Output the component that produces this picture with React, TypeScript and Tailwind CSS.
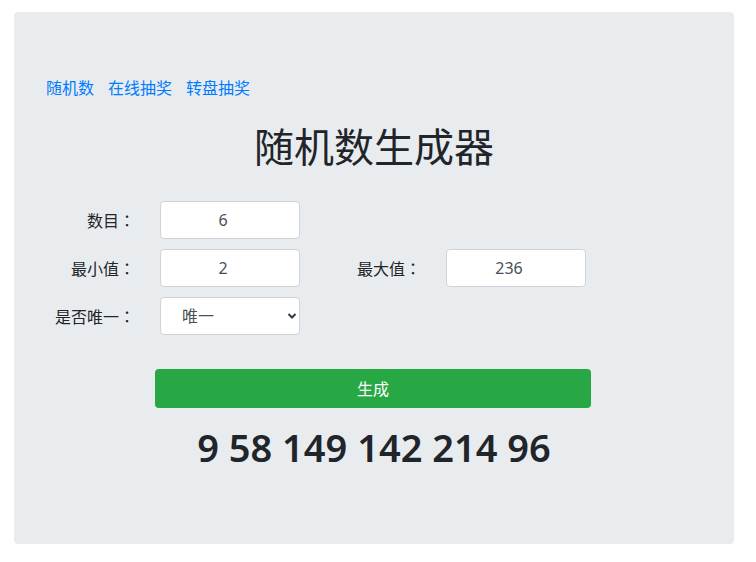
import { useState } from "react";

const FONT = "font-['Noto_Sans','Noto_Sans_CJK_SC',sans-serif]";

function Field({ value }: { value: string }) {
  return (
    <input
      className="h-[38px] w-[140px] rounded-[4px] border border-[#ced4da] bg-white pr-[14px] text-center text-[16px] text-[#495057] outline-none"
      defaultValue={value}
    />
  );
}

// colon drawn with a JP face so it sits centred like the reference
function Label({ text }: { text: string }) {
  return (
    <label className="block w-[89px] shrink-0 text-right text-[16px] text-[#212529]">
      {text}
      <span className="font-['Noto_Sans_CJK_JP',sans-serif]">：</span>
    </label>
  );
}

export default function App() {
  const [nums] = useState("9 58 149 142 214 96");

  return (
    <div className={`${FONT} h-[562px] w-[756px] bg-white pl-[14px] pt-[12px]`}>
      <div className="flex h-[532px] w-[720px] flex-col rounded-[4px] bg-[#e9ecef] px-[32px] pt-[64px]">
        <nav className="flex h-[24px] items-center gap-[14px] text-[16px] leading-[24px] text-[#007bff]">
          <a href="#">随机数</a>
          <a href="#">在线抽奖</a>
          <a href="#">转盘抽奖</a>
        </nav>

        <h1 className="mt-[23px] text-center text-[40px] font-normal leading-[48px] text-[#212529]">
          随机数生成器
        </h1>

        <div className="mt-[30px] flex flex-col gap-[10px]">
          <div className="flex items-center">
            <Label text="数目" />
            <div className="ml-[25px]">
              <Field value="6" />
            </div>
          </div>
          <div className="flex items-center">
            <Label text="最小值" />
            <div className="ml-[25px]">
              <Field value="2" />
            </div>
            <div className="ml-[32px]">
              <Label text="最大值" />
            </div>
            <div className="ml-[25px]">
              <Field value="236" />
            </div>
          </div>
          <div className="flex items-center">
            <Label text="是否唯一" />
            <div className="relative ml-[25px]">
              <select
                className="h-[38px] w-[140px] appearance-none rounded-[4px] border border-[#ced4da] bg-white pl-[21px] text-[16px] text-[#495057] outline-none"
                defaultValue="唯一"
              >
                <option>唯一</option>
                <option>可重复</option>
              </select>
              <svg
                className="pointer-events-none absolute right-[3px] top-[15px] h-[8px] w-[10px] text-[#343a40]"
                viewBox="0 0 10 8"
                fill="none"
                stroke="currentColor"
                strokeWidth={2}
              >
                <path d="M1.5 2l3.5 3.5L8.5 2" />
              </svg>
            </div>
          </div>
        </div>

        <button className="ml-[109px] mt-[34px] h-[39px] w-[436px] rounded-[4px] bg-[#28a745] text-[16px] text-white">
          生成
        </button>

        <div className="mt-[15px] text-center text-[38px] font-semibold leading-[48px] text-[#212529]">
          {nums}
        </div>
      </div>
    </div>
  );
}
